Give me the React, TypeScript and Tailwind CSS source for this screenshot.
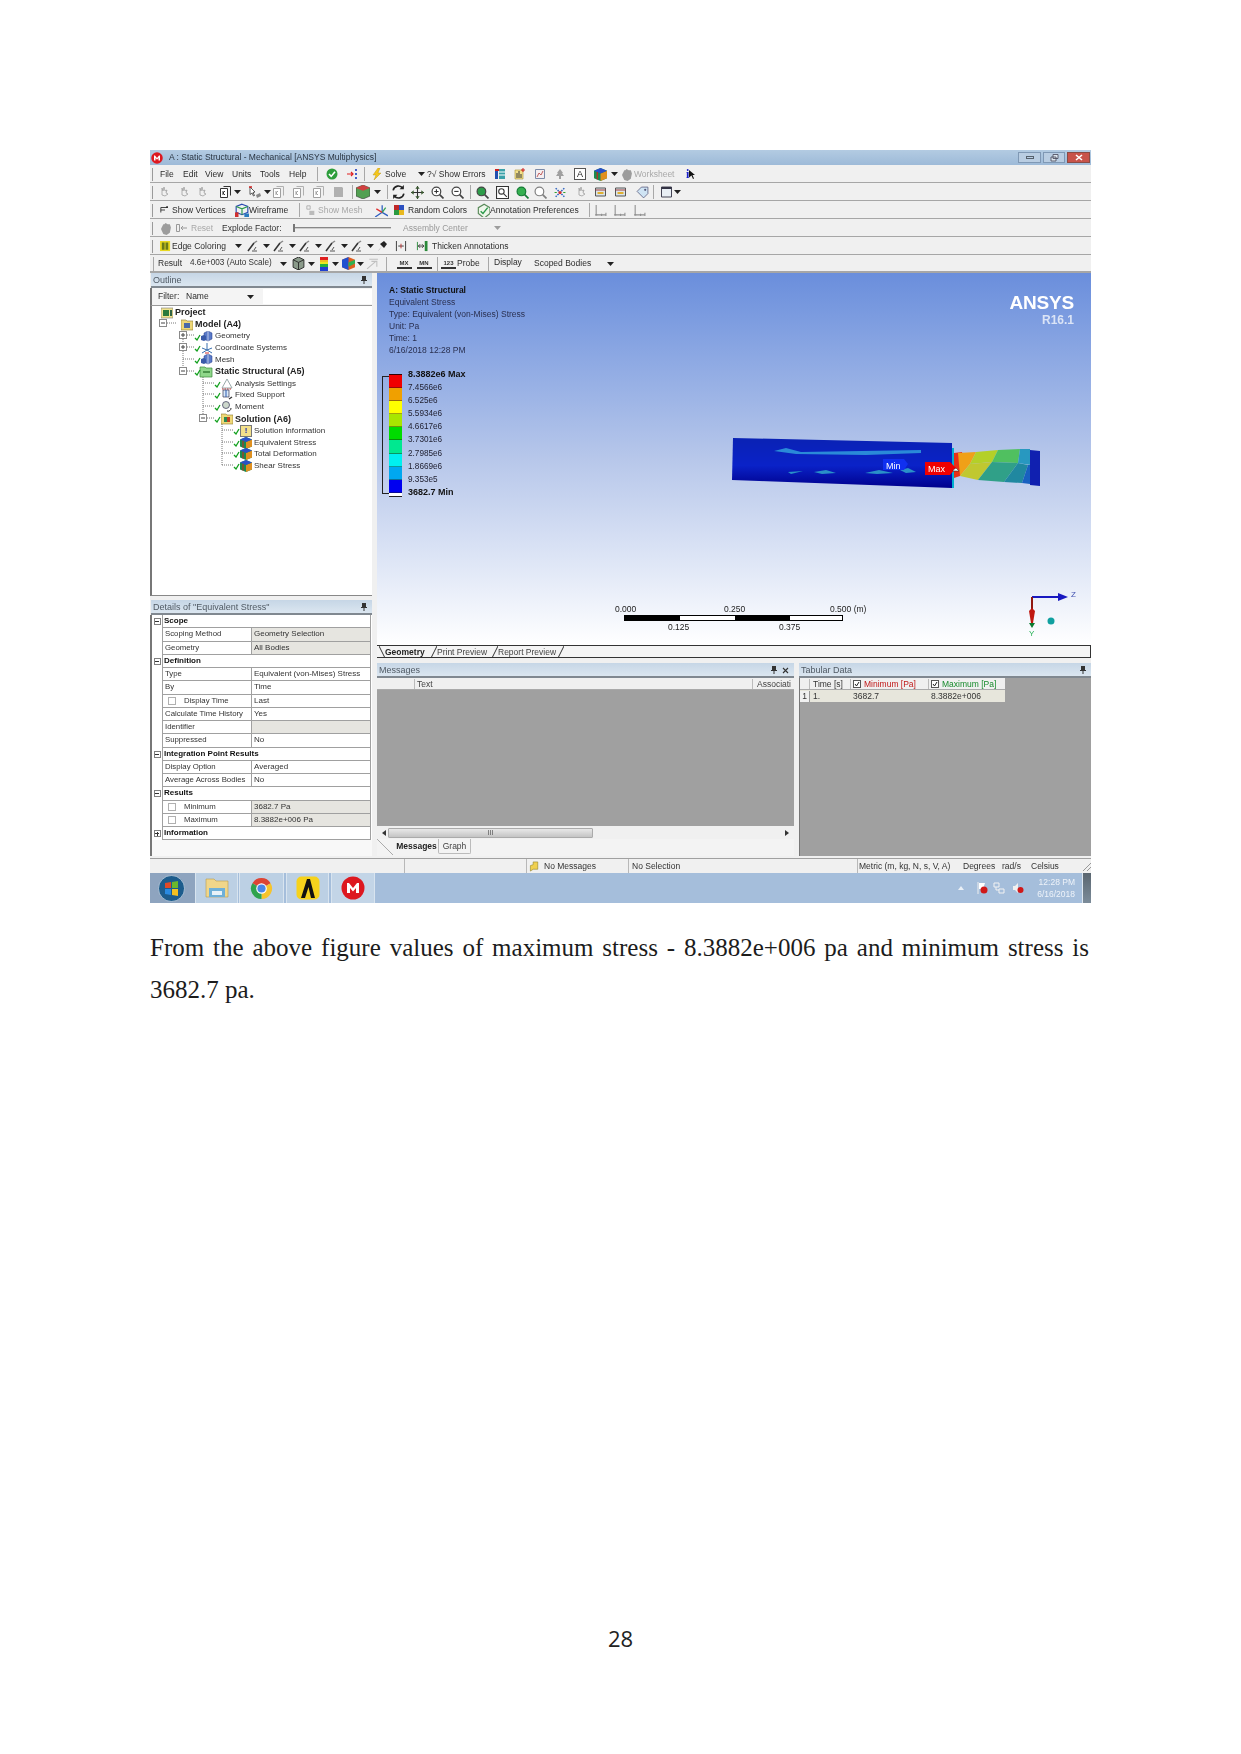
import React from 'react'

const Sv = ({ children, w = 12, h = 12, vb = '0 0 12 12' }: any) => (
    <svg width={w} height={h} viewBox={vb} className="shrink-0">{children}</svg>
)

const Slot = ({ className = '', children }: any) => (
    <div className={`shrink-0 flex items-center justify-center ${className}`}>{children}</div>
)

const Drop = ({ className = 'w-[10px]' }: any) => (
    <Slot className={className}>
        <Sv w={7} h={4} vb="0 0 7 4"><path d="M0 0h7L3.5 4z" fill="#222" /></Sv>
    </Slot>
)

const Grip = () => <div className="shrink-0 w-[1px] h-[13px] bg-[#9a9a9a] ml-[2px] mr-[5px]" />
const Sep = ({ className = 'w-[10px]' }: any) => (
    <Slot className={className}><div className="w-[1px] h-[14px] bg-[#a8a8a8]" /></Slot>
)

const Row = ({ children, className = '' }: any) => (
    <div className={`h-[18px] shrink-0 flex items-center pt-[1px] border-b border-[#a6a6a6] bg-[#f0f0f0] whitespace-nowrap ${className}`}>
        {children}
    </div>
)

/* toolbar icons */
const Check = () => (
    <Sv><circle cx="6" cy="6" r="5.5" fill="#2e9e3c" /><path d="M3 6l2.2 2.4L9 3.8" stroke="#fff" strokeWidth="1.6" fill="none" /></Sv>
)
const DotsArrow = () => (
    <Sv><path d="M1 6h6M5 4l2 2-2 2" stroke="#e02020" strokeWidth="1.2" fill="none" /><path d="M10 1v2M10 5v2M10 9v2" stroke="#1a3cc0" strokeWidth="1.6" /></Sv>
)
const Bolt = () => <Sv><path d="M7 0L2 7h3L3 12l7-7H7l2-5z" fill="#f4c71c" stroke="#b08a10" strokeWidth=".4" /></Sv>
const TableIc = () => (
    <Sv><path d="M1 3h3v8H1z" fill="#2050b0" /><path d="M5 1h6v10H5z" fill="#3aa0a8" /><path d="M1 1h4v2H1z" fill="#d02020" /><path d="M5 4h6M5 7h6" stroke="#fff" /></Sv>
)
const ChartIc = () => (
    <Sv><path d="M1 2h8v9H1z" fill="#f3e08a" stroke="#a89030" strokeWidth=".6" /><path d="M3 10V5M5 10V3M7 10V6" stroke="#333" /><path d="M9 0v4M7 2h4" stroke="#d02020" /></Sv>
)
const PaleChart = () => (
    <Sv><path d="M1.5 1.5h9v9h-9z" fill="#f4eef0" stroke="#7a8aa8" /><path d="M3 9l2-4 2 2 2-4" stroke="#c06060" fill="none" /></Sv>
)
const TreeIc = () => <Sv><path d="M6 1l3 4H8l2 3H7v3H5V8H2l2-3H3z" fill="#a0a0a0" /></Sv>
const BoxA = () => (
    <Slot className="w-[12px] h-[12px] border border-[#555] bg-white text-[9px] leading-none text-[#222]">A</Slot>
)
const ColorCube = ({ w = 13 }: any) => (
    <Sv w={w} h={w}>
        <path d="M6 0l6 2.5v7L6 12 0 9.5v-7z" fill="#1a8a50" />
        <path d="M6 5l6-2.5v7L6 12z" fill="#e09020" />
        <path d="M0 2.500l6-2.500 6 2.500-6 2.500z" fill="#2a50c8" />
        <path d="M3 3.800v6.900" stroke="#d02020" />
    </Sv>
)
const Hand = () => <Sv w={13} h={13}><path d="M2 6l2-4h1l1-1 2 1h2l1 3-1 5-3 2-3-1-2-4z" fill="#9c9c9c" /></Sv>
const Page = ({ dark = false }: any) => (
    <Sv w={13} h={13} vb="0 0 13 13">
        <path d="M1.500 2.500h7v9h-7z" fill="#fff" stroke={dark ? '#333' : '#a0a0a0'} />
        <path d="M4.500 .5h7v9" fill="none" stroke={dark ? '#333' : '#b0b0b0'} />
        <path d="M4 5v4M4 7l2-2M4 7l2 2" stroke={dark ? '#333' : '#a0a0a0'} />
    </Sv>
)
const Faded = () => (
    <Sv><path d="M3 5V2l1 3 1-4 1 4 2-1-1 3 2 1-3 2-3-1z" fill="none" stroke="#a0a0a0" strokeWidth=".8" /></Sv>
)
const Sel = () => (
    <Sv w={14} h={13} vb="0 0 14 13"><path d="M2 1l5 5-2 .500 1.500 3-1 .500L4 7l-2 1.500z" fill="#fff" stroke="#333" strokeWidth=".8" /><path d="M1 1h3" stroke="#d02020" strokeWidth="1.500" /><path d="M8 9l4-2 1 3-4 2z" fill="#888" /></Sv>
)
const GrayCube = () => <Sv><path d="M2 1h8l1 1v9H2z" fill="#b0b0b0" /></Sv>
const SelCube = () => (
    <Sv w={14} h={14}><path d="M6 0l6 2.500v7L6 12 0 9.500v-7z" fill="#52a052" stroke="#333" strokeWidth=".5" /><path d="M0 2.500l6 2.500 6-2.500L6 0z" fill="#d04040" /></Sv>
)
const Rotate = () => (
    <Sv w={15} h={14} vb="0 0 14 13"><path d="M2 5a5 5 0 019-2M12 8a5 5 0 01-9 2" stroke="#222" strokeWidth="1.500" fill="none" /><path d="M12 0v4H8zM2 13V9h4z" fill="#222" /></Sv>
)
const Pan = () => (
    <Sv w={13} h={13} vb="0 0 12 12"><path d="M6 0v12M0 6h12" stroke="#333" /><path d="M6 0L4 2.500h4zM6 12L4 9.500h4zM0 6l2.500-2v4zM12 6L9.500 4v4z" fill="#3a5a30" /></Sv>
)
const Mag = ({ fill = '#fff', sign = '', stroke = '#444' }: any) => (
    <Sv w={13} h={13} vb="0 0 12 12">
        <circle cx="5" cy="5" r="4" fill={fill} stroke={stroke} strokeWidth="1.100" />
        <path d="M8 8l3.500 3.500" stroke={stroke} strokeWidth="1.500" />
        {sign === '+' && <path d="M3 5h4M5 3v4" stroke="#333" />}
        {sign === '-' && <path d="M3 5h4" stroke="#333" />}
    </Sv>
)
const BoxMag = () => (
    <Sv w={13} h={13} vb="0 0 12 12"><path d="M.5 .5h11v11H.5z" fill="#fff" stroke="#333" /><circle cx="5" cy="5" r="2.500" fill="none" stroke="#333" /><path d="M7 7l3 3" stroke="#333" /></Sv>
)
const Dots = () => (
    <Sv w={14} h={13}><path d="M2 2l8 8M10 2l-8 8" stroke="#2a60c0" strokeWidth="1.300" strokeDasharray="1.500 1" /><circle cx="6" cy="6" r="1.500" fill="#d03030" /><path d="M1 6h2M9 6h2" stroke="#30a030" /></Sv>
)
const Window = () => (
    <Sv w={13} h={12}><path d="M1 1h10v10H1z" fill="#e8eef4" stroke="#445" /><path d="M1 1h10v2H1z" fill="#334" /></Sv>
)
const SmallBox = () => (
    <Sv w={13} h={12}><path d="M1 2h10v8H1z" fill="#dce4ea" stroke="#555" /><path d="M1 4h10" stroke="#a04040" /><path d="M3 6h6v2H3z" fill="#e0b030" /></Sv>
)
const Tag = () => (
    <Sv w={13} h={13}><path d="M1 5l4-4h6v6l-4 4z" fill="#cfe4f4" stroke="#557" strokeWidth=".7" /><circle cx="8.500" cy="3.500" r="1" fill="#557" /></Sv>
)
const Axes = () => (
    <Sv w={13} h={13}><path d="M2 1v9h9" stroke="#909090" fill="none" /><path d="M1 10h2M7 9v2M11 8v3" stroke="#909090" /></Sv>
)
const Vert = () => <Sv w={10} h={10}><path d="M1 9V3h8M1 6h5" stroke="#222" fill="none" /><rect x="7.500" y="1.500" width="2" height="2" fill="#222" /></Sv>
const Wire = () => (
    <Sv w={14} h={14}><path d="M6 1l5 2v5l-5 2-5-2V3z" fill="none" stroke="#2a4ab0" /><path d="M1 3l5 2 5-2M6 5v5" stroke="#2a9a4a" fill="none" /><path d="M0 8h3v4H0z" fill="#d03030" /><path d="M8 9h4v3H8z" fill="#2a7ac0" /></Sv>
)
const Star = () => (
    <Sv w={14} h={14}><path d="M7 2v6M7 8L1 12M7 8l5 3" stroke="#3060c0" strokeWidth="1.100" /><path d="M2 5l5 3" stroke="#e03030" strokeWidth="1.100" /><path d="M7 8l3-4" stroke="#30a050" strokeWidth="1.100" /></Sv>
)
const Random = () => (
    <Sv w={12} h={12}><path d="M1 1h5v5H1z" fill="#c02828" /><path d="M6 1h5v5H6z" fill="#2c50c0" /><path d="M1 6h5v5H1z" fill="#2a9a40" /><path d="M6 6h5v5H6z" fill="#e8b81e" /></Sv>
)
const Annot = () => (
    <Sv w={14} h={14}><path d="M7 1l5 3 0 5-5 4-5-4V4z" fill="#eef6ea" stroke="#5a8a5a" /><path d="M4 7l2 2 4-5" stroke="#2a9a4a" fill="none" strokeWidth="1.200" /></Sv>
)
const EdgeIc = () => (
    <Sv w={11} h={11}><path d="M0 0h11v11H0z" fill="#e8d820" /><path d="M2 1.500h3v8H2zM6 1.500h3v8H6z" fill="#6a7a18" /></Sv>
)
const Pen = () => (
    <Sv w={12} h={12}><path d="M1 11L7 3" stroke="#333" strokeWidth="1.500" /><path d="M7 3l3-2" stroke="#888" strokeWidth="1.500" /><path d="M7 10l2-3M5 11h5" stroke="#555" /></Sv>
)
const Pin = () => <Sv><path d="M2 11l4-5-2-2 4-3 3 3-3 4-2-2-3 4z" fill="#222" /></Sv>
const Thin = () => <Sv w={12} h={11}><path d="M1 0v11M11 0v11M3 5.500h6" stroke="#333" /><path d="M6 3v5" stroke="#c03030" /></Sv>
const Thick = () => <Sv w={12} h={11}><path d="M1 1v9" stroke="#2a8a3a" /><path d="M9 0h3v11H9z" fill="#2a8a3a" /><path d="M2 5.500h6M6 3.500l2 2-2 2M4 3.500l-2 2 2 2" stroke="#333" fill="none" /></Sv>
const GCube = () => (
    <Sv w={13} h={13}><path d="M6 0l5 2.500v7L6 12 1 9.500v-7z" fill="#8a9a8a" stroke="#222" strokeWidth=".8" /><path d="M1 2.500L6 5l5-2.500M6 5v7" stroke="#222" fill="none" strokeWidth=".8" /></Sv>
)
const ColorBar = () => (
    <Sv w={8} h={14} vb="0 0 8 14">
        <path d="M0 0h8v3H0z" fill="#e02020" /><path d="M0 3h8v2H0z" fill="#f0c020" /><path d="M0 5h8v2H0z" fill="#e8e820" />
        <path d="M0 7h8v3H0z" fill="#20b040" /><path d="M0 10h8v4H0z" fill="#2040d0" />
    </Sv>
)
const Rainbow = () => (
    <Sv w={13} h={13}><path d="M6 0l6 2.500v7L6 12 0 9.500v-7z" fill="#e06020" /><path d="M0 2.500L6 0v12L0 9.500z" fill="#2050d0" /><path d="M6 5l6-2.500V6L6 9z" fill="#30b050" /></Sv>
)
const Vec = () => <Sv w={13} h={13}><path d="M1 11l8-7M5 4h5v5M3 2h8" stroke="#c0c0c0" fill="none" /></Sv>
const BoxBtn = ({ label }: any) => (
    <Slot className="w-[15px] h-[10px] text-[6px] leading-none border-b-2 border-[#333] font-bold text-[#333]">{label}</Slot>
)

/* tree icons */
const GreenCheck = () => (
    <Sv w={7} h={7} vb="0 0 7 7"><path d="M1 4l2 2 3-5" stroke="#12a01e" strokeWidth="1.300" fill="none" /></Sv>
)
const TreeIcon = ({ kind }: any) => {
    if (kind === 'project') return <Sv><path d="M0 1h12v10H0z" fill="#f1e38e" stroke="#777" strokeWidth=".6" /><path d="M2 3h6v6H2z" fill="#2a7a3c" /><path d="M9 3h2v6H9z" fill="#364" /></Sv>
    if (kind === 'model') return <Sv><path d="M0 1h5l1 1h6v9H0z" fill="#efd878" stroke="#8a7a30" strokeWidth=".6" /><path d="M3 4h6v5H3z" fill="#4a6aa8" /></Sv>
    if (kind === 'static') return <Sv w={14} h={12} vb="0 0 14 12"><path d="M1 1h5l1 1h6v9H1z" fill="#8fd78a" stroke="#3a8a3a" strokeWidth=".7" /><path d="M4 6h7" stroke="#1f6a22" strokeWidth="1.200" /></Sv>
    if (kind === 'geom') return <Sv><path d="M3 2l4-2 4 2v6l-4 2-4-2z" fill="#5a7ac8" stroke="#223a88" strokeWidth=".5" /><path d="M0 5l3-1 2 1v4l-2 1-3-1z" fill="#3a5aa8" /><path d="M7 0v10" stroke="#fff" strokeWidth=".6" /></Sv>
    if (kind === 'axes') return <Sv><path d="M6 1v7M6 8L1 11M6 8l5 3M1 6l5 2 5-2" stroke="#3a70b0" fill="none" /><path d="M4 11h4" stroke="#d03030" /></Sv>
    if (kind === 'analysis') return <Sv><path d="M6 1L1 10h10z" fill="#fff" stroke="#9aa" /><path d="M1 11h10" stroke="#c03030" strokeDasharray="1.500 1" /></Sv>
    if (kind === 'fixed') return <Sv><path d="M2 1h6v7H2z" fill="#d8e8f8" stroke="#335" strokeWidth=".7" /><path d="M5 1v7" stroke="#2a5ab0" /><path d="M8 10l3-2" stroke="#333" strokeWidth="1.300" /></Sv>
    if (kind === 'moment') return <Sv><circle cx="5" cy="4" r="3.500" fill="#cdd8cc" stroke="#335" strokeWidth=".7" /><path d="M6 10a3 3 0 004-3" stroke="#222" fill="none" /></Sv>
    if (kind === 'solution') return <Sv><path d="M0 1h5l1 1h6v9H0z" fill="#efd878" stroke="#8a7a30" strokeWidth=".6" /><path d="M3 4h3v5H3z" fill="#2a8a50" /><path d="M6 4h3v5H6z" fill="#c04020" /></Sv>
    if (kind === 'info') return <Slot className="w-[12px] h-[12px] bg-[#f3e08a] border border-[#777] text-[8px] font-bold leading-none text-[#1a2ab0]">!</Slot>
    return <ColorCube w={12} />
}

const treeRows = [
    { label: 'Project', bold: true, icon: 'project', pl: 'pl-[5px]', check: false },
    { label: 'Model (A4)', bold: true, icon: 'model', pl: 'pl-[25px]', check: false },
    { label: 'Geometry', icon: 'geom', pl: 'pl-[45px]', check: true },
    { label: 'Coordinate Systems', icon: 'axes', pl: 'pl-[45px]', check: true },
    { label: 'Mesh', icon: 'geom', pl: 'pl-[45px]', check: true },
    { label: 'Static Structural (A5)', bold: true, icon: 'static', pl: 'pl-[45px]', check: true },
    { label: 'Analysis Settings', icon: 'analysis', pl: 'pl-[65px]', check: true },
    { label: 'Fixed Support', icon: 'fixed', pl: 'pl-[65px]', check: true },
    { label: 'Moment', icon: 'moment', pl: 'pl-[65px]', check: true },
    { label: 'Solution (A6)', bold: true, icon: 'solution', pl: 'pl-[65px]', check: true },
    { label: 'Solution Information', icon: 'info', pl: 'pl-[84px]', check: true },
    { label: 'Equivalent Stress', icon: 'cube', pl: 'pl-[84px]', check: true },
    { label: 'Total Deformation', icon: 'cube', pl: 'pl-[84px]', check: true },
    { label: 'Shear Stress', icon: 'cube', pl: 'pl-[84px]', check: true },
]

const Expander = ({ x, y, plus = false }: any) => (
    <g>
        <rect x={x - 3.5} y={y - 3.5} width="7" height="7" fill="#fff" stroke="#8a8a8a" />
        <path d={`M${x - 2} ${y}h4`} stroke="#444" />
        {plus && <path d={`M${x} ${y - 2}v4`} stroke="#444" />}
    </g>
)

const TreeLines = () => (
    <svg width="120" height="170" viewBox="0 0 120 170" className="absolute left-0 top-0">
        <g stroke="#777" strokeDasharray="1 1" fill="none">
            <path d="M11 17h14M31 29v36M31 29h12M31 41h12M31 53h12M31 65h12" />
            <path d="M51 65v47M51 77h12M51 88h12M51 100h12M51 112h12" />
            <path d="M70 112v47M70 124h12M70 136h12M70 147h12M70 159h12" />
        </g>
        <Expander x={11} y={17} />
        <Expander x={31} y={29} plus />
        <Expander x={31} y={41} plus />
        <Expander x={31} y={65} />
        <Expander x={51} y={112} />
    </svg>
)

const Head = ({ title, children, className = '' }: any) => (
    <div className={`h-[15px] shrink-0 flex items-center justify-between px-[2px] pt-[1px] bg-linear-to-b from-[#c6d6e6] to-[#dbe6f0] border-b-2 border-[#808890] text-[9px] text-[#505a64] ${className}`}>
        <span>{title}</span>
        <div className="flex items-center gap-[5px] pr-[3px]">{children}</div>
    </div>
)

const PinIc = () => <Sv w={6} h={8} vb="0 0 6 8"><path d="M1 0h4v4h1v1H3.500v3h-1V5H0V4h1z" fill="#333" /></Sv>

const Box = () => <div className="shrink-0 w-[8px] h-[8px] border border-[#b0b0b0] bg-white mx-[3px] mr-[8px]" />

const detailRows: any[] = [
    { section: 'Scope', open: true },
    { name: 'Scoping Method', value: 'Geometry Selection', shade: true },
    { name: 'Geometry', value: 'All Bodies', shade: true },
    { section: 'Definition', open: true },
    { name: 'Type', value: 'Equivalent (von-Mises) Stress' },
    { name: 'By', value: 'Time' },
    { name: 'Display Time', value: 'Last', box: true },
    { name: 'Calculate Time History', value: 'Yes' },
    { name: 'Identifier', value: '', shade: true },
    { name: 'Suppressed', value: 'No' },
    { section: 'Integration Point Results', open: true },
    { name: 'Display Option', value: 'Averaged' },
    { name: 'Average Across Bodies', value: 'No' },
    { section: 'Results', open: true },
    { name: 'Minimum', value: '3682.7 Pa', shade: true, box: true },
    { name: 'Maximum', value: '8.3882e+006 Pa', shade: true, box: true },
    { section: 'Information', open: false },
]

const DetailBox = ({ open }: any) => (
    <Slot className="w-[10px]">
        <div className="w-[7px] h-[7px] border border-[#808080] bg-white flex items-center justify-center relative">
            <div className="w-[4px] h-[1px] bg-[#333]" />
            {!open && <div className="absolute w-[1px] h-[4px] bg-[#333]" />}
        </div>
    </Slot>
)

const DetailsTable = () => (
    <div className="flex flex-col bg-white pr-[1px] text-[8px] whitespace-nowrap">
        {detailRows.map((r) => r.section ? (
            <div key={r.section} className="h-[13.25px] flex items-center">
                <DetailBox open={r.open} />
                <div className="flex-1 h-full flex items-center pl-[1px] font-bold text-[#111] border border-t-0 border-[#a0a0a0] bg-white">{r.section}</div>
            </div>
        ) : (
            <div key={r.name} className="h-[13.25px] flex items-center">
                <div className="w-[10px] shrink-0" />
                <div className="w-[90px] shrink-0 h-full flex items-center pl-[2px] text-[7.800px] border-l border-b border-r border-[#a0a0a0] text-[#333]">
                    {r.box && <Box />}
                    {r.name}
                </div>
                <div className={`flex-1 h-full flex items-center pl-[2px] border-b border-r border-[#a0a0a0] text-[#333] ${r.shade ? 'bg-[#e6e5e0]' : 'bg-white'}`}>{r.value}</div>
            </div>
        ))}
    </div>
)

const legend = [
    ['bg-[#f00000]', '8.3882e6 Max', true],
    ['bg-[#f0a000]', '7.4566e6', false],
    ['bg-[#ffff00]', '6.525e6', false],
    ['bg-[#a8e600]', '5.5934e6', false],
    ['bg-[#00dc00]', '4.6617e6', false],
    ['bg-[#00e890]', '3.7301e6', false],
    ['bg-[#00f0f0]', '2.7985e6', false],
    ['bg-[#00a8f0]', '1.8669e6', false],
    ['bg-[#0000f0]', '9.353e5', false],
] as const

const Legend = () => (
    <div className="mt-[19px] -ml-[7px] flex">
        <div className="w-[7px] h-[118px] mt-[2px] border-l border-t border-b border-[#222]" />
        <div className="flex flex-col w-[13px]">
            <div className="h-[1px] bg-[#300]" />
            {legend.map(([c]) => <div key={c} className={`h-[13.1px] border-b border-[#1a1a1a]/40 ${c}`} />)}
            <div className="h-[4px] bg-white border-b border-[#222]" />
        </div>
        <div className="flex flex-col ml-[6px] text-[8.200px] text-[#223] leading-[13.1px] -mt-[6px]">
            {legend.map(([c, t, b]) => <span key={t} className={b ? 'font-bold text-[9px] text-[#111]' : ''}>{t}</span>)}
            <span className="font-bold text-[9px] text-[#111]">3682.7 Min</span>
        </div>
    </div>
)

const Model = () => (
    <svg width="380" height="80" viewBox="0 0 380 80" className="absolute left-[343px] top-[147px]">
        <defs>
            <linearGradient id="body" x1="0" y1="0" x2="0" y2="1">
                <stop offset="0" stopColor="#0a22b4" />
                <stop offset=".55" stopColor="#0a22c8" />
                <stop offset="1" stopColor="#00008c" />
            </linearGradient>
        </defs>
        <path d="M13 18L232 23V68L12 60Z" fill="url(#body)" />
        <path d="M54 31l12-3 15 4 120-2v3l-55 2-70-1z" fill="#2a8ad8" />
        <path d="M68 52l15-1-12 3zM94 52l12-2 10 3-14 1zM145 53l14-3 14 3-16 1zM180 50l8-2 8 4-10 1z" fill="#2a90c8" />
        <path d="M232 28l2 0v40l-2 0z" fill="#00b0d0" />
        <path d="M234 33l8-1 2 10-4 14-6 2z" fill="#e83018" />
        <path d="M238 33l18-1-6 12-10 12z" fill="#f0a018" />
        <path d="M256 32l22-2-6 12-22 2z" fill="#b4d028" />
        <path d="M278 30l22-1-2 14-26-1z" fill="#50c060" />
        <path d="M240 56l10-12 22-2-14 18z" fill="#c0c830" />
        <path d="M272 42l26 1-14 19-26-2z" fill="#30a088" />
        <path d="M298 43l10 2-6 18-18-1z" fill="#2088a0" />
        <path d="M300 29h10l1 16-13-2z" fill="#2898c0" />
        <path d="M308 45l3 0-1 19-8-1z" fill="#1860c0" />
        <path d="M310 30l10 1v35l-10-1z" fill="#1020b0" />
        <path d="M163 39h21l4 5-4 6h-21z" fill="#1030f0" />
        <text x="166" y="48.500" fontSize="9" fill="#fff" fontFamily="Liberation Sans, sans-serif">Min</text>
        <path d="M205 42h25l6 6-6 7h-25z" fill="#f00000" />
        <text x="208" y="52" fontSize="9" fill="#fff" fontFamily="Liberation Sans, sans-serif">Max</text>
        <path d="M233 50l3-2 3 3h-6z" fill="#fff" stroke="#222" strokeWidth=".5" />
    </svg>
)

const ScaleBar = () => (
    <div className="absolute left-[238px] top-[330px] w-[260px] text-[8.500px] text-[#222] whitespace-nowrap">
        <div className="flex h-[12px] items-center">
            <span className="w-[109px]">0.000</span>
            <span className="w-[106px]">0.250</span>
            <span>0.500 (m)</span>
        </div>
        <div className="ml-[9px] w-[219px] h-[6px] flex border border-black">
            <div className="w-[55px] bg-black" /><div className="w-[55px] bg-white" />
            <div className="w-[55px] bg-black" /><div className="flex-1 bg-white" />
        </div>
        <div className="flex h-[13px] items-center pl-[53px]">
            <span className="w-[111px]">0.125</span>
            <span>0.375</span>
        </div>
    </div>
)

const Triad = () => (
    <svg width="66" height="46" viewBox="0 0 66 46" className="absolute left-[638px] top-[318px]">
        <path d="M17 6h26" stroke="#1818c0" strokeWidth="2" />
        <path d="M43 2l10 4-10 4z" fill="#1818c0" />
        <text x="56" y="6" fontSize="8" fill="#4050b0" fontFamily="Liberation Sans, sans-serif">Z</text>
        <path d="M17 6v16" stroke="#901810" strokeWidth="2" />
        <path d="M14 20l3-3 3 3-2 12h-2z" fill="#c01810" />
        <path d="M14 32h6l-3 5z" fill="#0a7a30" />
        <text x="14" y="45" fontSize="8" fill="#20b050" fontFamily="Liberation Sans, sans-serif">Y</text>
        <circle cx="36" cy="30" r="3.500" fill="#10a0a0" />
    </svg>
)

const TabEdge = () => (
    <Sv w={6} h={12} vb="0 0 6 12"><path d="M0 12L6 0" stroke="#333" /></Sv>
)
const TabEdgeL = () => (
    <Sv w={6} h={12} vb="0 0 6 12"><path d="M0 0L6 12" stroke="#333" /></Sv>
)

const CheckBox = () => (
    <div className="w-[8px] h-[8px] border border-[#555] bg-white flex items-center justify-center shrink-0 mr-[3px]">
        <Sv w={6} h={6} vb="0 0 6 6"><path d="M1 3l1.500 2L5 1" stroke="#222" fill="none" /></Sv>
    </div>
)

const MegaLogo = ({ w = 24 }: any) => (
    <Sv w={w} h={w} vb="0 0 24 24">
        <circle cx="12" cy="12" r="11.500" fill="#dd1820" />
        <path d="M6 17V7h2l4 5 4-5h2v10h-3v-5l-3 3.500L9 12v5z" fill="#fff" />
    </Sv>
)

export default function App() {
    return (
        <div className="w-[1241px] h-[1754px] bg-white flex flex-col px-[150px] pt-[150px] font-['Liberation_Serif',serif] text-[#1c1c1c]">
            <div className="w-[941px] h-[753px] shrink-0 flex flex-col bg-[#f0f0f0] font-['Liberation_Sans',sans-serif] text-[8.500px] text-[#2c2c2c] leading-none blur-[0.4px]">
                {/* title */}
                <div className="h-[15px] shrink-0 flex items-center pl-[1px] bg-linear-to-b from-[#b3cbe2] to-[#9dbad8] text-[#2a3440]">
                    <MegaLogo w={12} />
                    <span className="ml-[6px] flex-1">A : Static Structural - Mechanical [ANSYS Multiphysics]</span>
                    <div className="flex h-[11px] items-stretch gap-[2px] mr-[1px]">
                        <Slot className="w-[23px] border border-[#7f98b4] bg-[#b9cde2]"><div className="w-[8px] h-[3px] border border-[#55606c]" /></Slot>
                        <Slot className="w-[22px] border border-[#7f98b4] bg-[#b9cde2]"><Sv w={9} h={8} vb="0 0 9 8"><path d="M3 .5h5v4H3zM1 3h5v4H1z" fill="#dde6ee" stroke="#445" strokeWidth=".8" /></Sv></Slot>
                        <Slot className="w-[23px] border border-[#8a4a44] bg-[#c8534a]"><Sv w={8} h={7} vb="0 0 8 7"><path d="M1 1l6 5M7 1L1 6" stroke="#fff" strokeWidth="1.600" /></Sv></Slot>
                    </div>
                </div>
                {/* toolbars */}
                <Row>
                    <Grip />
                    <span className="ml-[2px] w-[23px]">File</span>
                    <span className="w-[22px]">Edit</span>
                    <span className="w-[27px]">View</span>
                    <span className="w-[28px]">Units</span>
                    <span className="w-[29px]">Tools</span>
                    <span className="w-[26px]">Help</span>
                    <Sep className="w-[4px]" />
                    <Slot className="w-[26px]"><Check /></Slot>
                    <Slot className="w-[14px]"><DotsArrow /></Slot>
                    <Sep />
                    <Slot className="w-[16px]"><Bolt /></Slot>
                    <span className="w-[30px]">Solve</span>
                    <Drop className="w-[12px]" />
                    <span className="w-[63px]">?√ Show Errors</span>
                    <Slot className="w-[20px]"><TableIc /></Slot>
                    <Slot className="w-[20px]"><ChartIc /></Slot>
                    <Slot className="w-[20px]"><PaleChart /></Slot>
                    <Slot className="w-[20px]"><TreeIc /></Slot>
                    <Slot className="w-[20px]"><BoxA /></Slot>
                    <Slot className="w-[20px]"><ColorCube /></Slot>
                    <Drop className="w-[8px]" />
                    <Slot className="w-[16px]"><Hand /></Slot>
                    <span className="w-[52px] text-[#a8a8a8]">Worksheet</span>
                    <span className="font-['Liberation_Serif',serif] font-bold text-[12px] text-[#1c22c8]">i</span>
                    <Sv w={7} h={9} vb="0 0 7 9"><path d="M0 0l6 5H3.500L5 8.500 4 9 2.500 5.500 0 7.500z" fill="#111" /></Sv>
                </Row>
                <Row>
                    <Grip />
                    <Slot className="w-[14px]"><Faded /></Slot>
                    <Slot className="w-[14px] ml-[6px]"><Faded /></Slot>
                    <Slot className="w-[14px] ml-[4px]"><Faded /></Slot>
                    <Slot className="w-[14px] ml-[8px]"><Page dark /></Slot>
                    <Drop className="w-[8px] ml-[1px]" />
                    <Slot className="w-[14px] ml-[7px]"><Sel /></Slot>
                    <Drop className="w-[8px] ml-[1px]" />
                    <Slot className="w-[14px]"><Page /></Slot>
                    <Slot className="w-[14px] ml-[6px]"><Page /></Slot>
                    <Slot className="w-[14px] ml-[6px]"><Page /></Slot>
                    <Slot className="w-[14px] ml-[6px]"><GrayCube /></Slot>
                    <Sep className="w-[4px] ml-[5px]" />
                    <Slot className="w-[14px] ml-[2px]"><SelCube /></Slot>
                    <Drop className="w-[8px] ml-[3px]" />
                    <Sep className="w-[4px] ml-[4px]" />
                    <Slot className="w-[14px] ml-[2px]"><Rotate /></Slot>
                    <Slot className="w-[14px] ml-[5px]"><Pan /></Slot>
                    <Slot className="w-[14px] ml-[6px]"><Mag sign="+" /></Slot>
                    <Slot className="w-[14px] ml-[6px]"><Mag sign="-" /></Slot>
                    <Sep className="w-[4px] ml-[4px]" />
                    <Slot className="w-[14px] ml-[3px]"><Mag fill="#2d9c4a" /></Slot>
                    <Slot className="w-[14px] ml-[6px]"><BoxMag /></Slot>
                    <Slot className="w-[14px] ml-[6px]"><Mag fill="#34b050" stroke="#157a35" /></Slot>
                    <Slot className="w-[14px] ml-[4px]"><Mag stroke="#808080" /></Slot>
                    <Slot className="w-[14px] ml-[6px]"><Dots /></Slot>
                    <Slot className="w-[14px] ml-[8px]"><Faded /></Slot>
                    <Slot className="w-[14px] ml-[4px]"><SmallBox /></Slot>
                    <Slot className="w-[14px] ml-[6px]"><SmallBox /></Slot>
                    <Slot className="w-[14px] ml-[8px]"><Tag /></Slot>
                    <Sep className="w-[4px] ml-[2px]" />
                    <Slot className="w-[14px] ml-[4px]"><Window /></Slot>
                    <Drop className="w-[8px]" />
                </Row>
                <Row>
                    <Grip />
                    <Slot className="w-[14px]"><Vert /></Slot>
                    <span className="w-[62px]">Show Vertices</span>
                    <Slot className="w-[15px]"><Wire /></Slot>
                    <span className="w-[47px]">Wireframe</span>
                    <Sep className="w-[7px]" />
                    <Slot className="w-[15px]"><Sv w={10} h={12}><path d="M1 1h4v4H1z" fill="none" stroke="#a8a8a8" /><path d="M4 7h6v5H4z" fill="#bbb" /></Sv></Slot>
                    <span className="w-[53px] text-[#a8a8a8]">Show Mesh</span>
                    <Slot className="w-[19px]"><Star /></Slot>
                    <Slot className="w-[18px]"><Random /></Slot>
                    <span className="w-[68px]">Random Colors</span>
                    <Slot className="w-[14px]"><Annot /></Slot>
                    <span className="w-[97px]">Annotation Preferences</span>
                    <Sep className="w-[5px]" />
                    <Slot className="w-[17px]"><Axes /></Slot>
                    <Slot className="w-[20px]"><Axes /></Slot>
                    <Slot className="w-[20px]"><Axes /></Slot>
                </Row>
                <Row>
                    <Grip />
                    <Slot className="w-[14px]"><Hand /></Slot>
                    <Slot className="w-[19px]"><Sv w={11} h={8} vb="0 0 11 8"><path d="M.5 .5h3v7h-3z" fill="none" stroke="#999" /><path d="M11 4H5M7 2L5 4l2 2" stroke="#999" fill="none" /></Sv></Slot>
                    <span className="w-[31px] text-[#a8a8a8]">Reset</span>
                    <span className="w-[71px] text-[#333]">Explode Factor:</span>
                    <div className="w-[98px] h-[7px] flex items-center relative shrink-0 mr-[12px]">
                        <div className="flex-1 h-[2px] bg-[#888] border-b border-[#ccc]" />
                        <div className="absolute left-0 w-[2px] h-[8px] bg-[#777]" />
                    </div>
                    <span className="w-[92px] text-[#999]">Assembly Center</span>
                    <Drop className="w-[4px] opacity-40" />
                </Row>
                <Row>
                    <Grip />
                    <Slot className="w-[14px]"><EdgeIc /></Slot>
                    <span className="w-[58px]">Edge Coloring</span>
                    <Drop className="w-[16px]" />
                    <Slot className="w-[14px]"><Pen /></Slot>
                    <Drop className="w-[12px]" />
                    <Slot className="w-[14px]"><Pen /></Slot>
                    <Drop className="w-[12px]" />
                    <Slot className="w-[14px]"><Pen /></Slot>
                    <Drop className="w-[12px]" />
                    <Slot className="w-[14px]"><Pen /></Slot>
                    <Drop className="w-[12px]" />
                    <Slot className="w-[14px]"><Pen /></Slot>
                    <Drop className="w-[12px]" />
                    <Slot className="w-[12px]"><Pin /></Slot>
                    <Slot className="w-[25px]"><Thin /></Slot>
                    <Slot className="w-[17px]"><Thick /></Slot>
                    <span className="ml-[2px]">Thicken Annotations</span>
                </Row>
                <Row className="border-b-2 border-[#808080]">
                    <Sep className="w-[7px]" />
                    <span className="w-[33px] pl-[1px]">Result</span>
                    <span className="w-[87px] text-[8.200px] text-[#333]">4.6e+003 (Auto Scale)</span>
                    <Drop className="w-[13px]" />
                    <Slot className="w-[16px]"><GCube /></Slot>
                    <Drop className="w-[11px]" />
                    <Slot className="w-[14px]"><ColorBar /></Slot>
                    <Drop className="w-[9px]" />
                    <Slot className="w-[16px]"><Rainbow /></Slot>
                    <Drop className="w-[9px]" />
                    <Slot className="w-[14px]"><Vec /></Slot>
                    <Sep className="w-[15px]" />
                    <Slot className="w-[20px]"><BoxBtn label="MX" /></Slot>
                    <Slot className="w-[20px]"><BoxBtn label="MN" /></Slot>
                    <Sep className="w-[6px]" />
                    <Slot className="w-[17px]"><BoxBtn label="123" /></Slot>
                    <span className="w-[26px]">Probe</span>
                    <Sep className="w-[11px]" />
                    <span className="w-[40px] -mt-[2px]">Display</span>
                    <span className="w-[71px]">Scoped Bodies</span>
                    <Drop />
                </Row>

                {/* panels */}
                <div className="flex-1 min-h-0 flex">
                    <div className="w-[222px] shrink-0 flex flex-col">
                        <Head title="Outline" className="ml-[1px]"><PinIc /></Head>
                        <div className="h-[17px] shrink-0 flex items-center border-l-2 border-[#777] pl-[4px] bg-[#f4f4f4]">
                            <span className="w-[30px] pl-[2px]">Filter:</span>
                            <span className="w-[61px]">Name</span>
                            <Drop className="w-[6px]" />
                            <div className="flex-1 self-stretch ml-[10px] my-[1px] bg-white" />
                        </div>
                        <div className="relative h-[291px] shrink-0 bg-white border-l-2 border-[#777] border-t border-b border-t-[#999] border-b-[#888] pt-[1px]">
                            <TreeLines />
                            <div className="relative flex flex-col whitespace-nowrap">
                                {treeRows.map((r) => (
                                    <div key={r.label} className={`h-[11.8px] flex items-center ${r.pl}`}>
                                        <div className="w-[18px] shrink-0 flex items-center justify-end relative">
                                            {r.check && <div className="absolute left-[-3px] top-[3px]"><GreenCheck /></div>}
                                            <div className="mr-[2px] flex"><TreeIcon kind={r.icon} /></div>
                                        </div>
                                        <span className={r.bold ? 'font-bold text-[9px] text-[#222]' : 'text-[8px] text-[#333]'}>{r.label}</span>
                                    </div>
                                ))}
                            </div>
                        </div>
                        <Head title='Details of "Equivalent Stress"' className="mt-[4px] ml-[1px]"><PinIc /></Head>
                        <div className="flex-1 border-l-2 border-[#777] bg-[#f8f8f8] flex flex-col">
                            <DetailsTable />
                        </div>
                    </div>

                    <div className="flex-1 min-w-0 ml-[5px] flex flex-col">
                        <div className="relative flex-1 min-h-0 pl-[12px] pt-[13px] overflow-hidden bg-linear-to-b from-[#6a8edc] via-[#b7c7ea] via-50% to-white text-[#2a3050]">
                            <div className="flex flex-col gap-[3px] leading-[9px] whitespace-nowrap">
                                <span className="font-bold text-[#111]">A: Static Structural</span>
                                <span>Equivalent Stress</span>
                                <span>Type: Equivalent (von-Mises) Stress</span>
                                <span>Unit: Pa</span>
                                <span>Time: 1</span>
                                <span>6/16/2018 12:28 PM</span>
                            </div>
                            <Legend />
                            <div className="absolute right-[17px] top-[19px] flex flex-col items-end text-white">
                                <span className="text-[19px] font-bold leading-[21px] tracking-[-0.2px]">ANSYS</span>
                                <span className="text-[12px] font-bold leading-[14px] text-[#dbe4f6]">R16.1</span>
                            </div>
                            <Model />
                            <ScaleBar />
                            <Triad />
                        </div>
                        <div className="h-[13px] shrink-0 flex items-center pl-[2px] pt-[1px] border border-[#333] border-l-0 bg-[#f4f4f4] whitespace-nowrap">
                            <TabEdgeL />
                            <span className="w-[46px] font-bold text-[#222]">Geometry</span>
                            <TabEdge />
                            <span className="w-[55px] text-[#444]">Print Preview</span>
                            <TabEdge />
                            <span className="w-[60px] text-[#444]">Report Preview</span>
                            <TabEdge />
                        </div>
                        <div className="flex-1 min-h-0 flex h-[193px] max-h-[193px] mt-[5px] gap-[5px]">
                            <div className="w-[417px] shrink-0 flex flex-col">
                                <Head title="Messages">
                                    <PinIc />
                                    <Sv w={7} h={7} vb="0 0 7 7"><path d="M1 1l5 5M6 1L1 6" stroke="#333" strokeWidth="1.100" /></Sv>
                                </Head>
                                <div className="h-[12px] shrink-0 flex items-center pt-[1px] bg-[#f0f0f0] border-b border-[#aaa] text-[#444]">
                                    <div className="w-[38px] h-full border-r border-[#bbb]" />
                                    <span className="w-[338px] pl-[2px] h-full flex items-center border-r border-[#bbb]">Text</span>
                                    <span className="pl-[4px] overflow-hidden">Associati</span>
                                </div>
                                <div className="flex-1 bg-[#a0a0a0]" />
                                <div className="h-[13px] shrink-0 flex items-center bg-[#f0f0f0] pl-[5px]">
                                    <Sv w={4} h={6} vb="0 0 4 6"><path d="M4 0v6L0 3z" fill="#333" /></Sv>
                                    <div className="w-[205px] h-[10px] ml-[2px] bg-linear-to-b from-[#e8e8e8] to-[#c4c4c4] border border-[#aaa] rounded-[1px] flex items-center justify-center text-[7px] text-[#555]">III</div>
                                    <div className="flex-1" />
                                    <Sv w={4} h={6} vb="0 0 4 6"><path d="M0 0v6l4-3z" fill="#333" /></Sv>
                                    <div className="w-[5px]" />
                                </div>
                                <div className="h-[17px] shrink-0 flex items-start bg-[#f3f3f3]">
                                    <Sv w={18} h={16} vb="0 0 18 16"><path d="M0 0l16 16" stroke="#aaa" /></Sv>
                                    <span className="w-[43px] h-[15px] flex items-center justify-center font-bold text-[#222]">Messages</span>
                                    <span className="w-[33px] h-[15px] flex items-center justify-center border-r border-b border-l border-[#bbb] rounded-b-[2px] text-[#444]">Graph</span>
                                </div>
                            </div>
                            <div className="flex-1 min-w-0 flex flex-col">
                                <Head title="Tabular Data"><PinIc /></Head>
                                <div className="flex-1 bg-[#a0a0a0] border-l border-[#777]">
                                    <div className="w-[205px] flex flex-col whitespace-nowrap">
                                        <div className="h-[12px] flex items-center pt-[1px] bg-[#f0f0f0] border-b border-[#aaa]">
                                            <div className="w-[10px] h-full border-r border-[#bbb]" />
                                            <span className="w-[41px] pl-[3px] h-full flex items-center border-r border-[#bbb] text-[#333]">Time [s]</span>
                                            <span className="w-[78px] pl-[2px] h-full flex items-center border-r border-[#bbb] text-[#c01818]"><CheckBox />Minimum [Pa]</span>
                                            <span className="flex-1 pl-[2px] h-full flex items-center text-[#168a2c]"><CheckBox />Maximum [Pa]</span>
                                        </div>
                                        <div className="h-[12px] flex items-center pt-[1px] bg-[#e7e6dc] text-[#333]">
                                            <span className="w-[10px] h-full flex items-center justify-center border-r border-[#999] bg-[#f0f0f0]">1</span>
                                            <span className="w-[41px] pl-[3px]">1.</span>
                                            <span className="w-[78px] pl-[2px]">3682.7</span>
                                            <span className="pl-[2px]">8.3882e+006</span>
                                        </div>
                                    </div>
                                </div>
                            </div>
                        </div>
                    </div>
                </div>

                {/* status bar */}
                <div className="h-[15px] shrink-0 mt-[2px] flex items-stretch border-t border-[#a0a0a0] bg-[#f0f0f0] text-[#333] whitespace-nowrap">
                    <div className="w-[255px] border-r border-[#b8b8b8]" />
                    <div className="w-[122px] border-r border-[#b8b8b8]" />
                    <div className="w-[102px] border-r border-[#b8b8b8] flex items-center pl-[2px]">
                        <Sv w={12} h={11}><path d="M1 5l3-1V1h5v8H4l-3 2z" fill="#f0d050" stroke="#8a7a20" strokeWidth=".6" /></Sv>
                        <span className="ml-[3px]">No Messages</span>
                    </div>
                    <div className="w-[229px] border-r border-[#b8b8b8] flex items-center pl-[3px]">No Selection</div>
                    <div className="flex-1 flex items-center pl-[1px]">
                        <span className="w-[104px]">Metric (m, kg, N, s, V, A)</span>
                        <span className="w-[39px]">Degrees</span>
                        <span className="w-[29px]">rad/s</span>
                        <span className="flex-1">Celsius</span>
                        <Sv w={9} h={9} vb="0 0 9 9"><path d="M1 9l8-8M5 9l4-4" stroke="#999" /></Sv>
                    </div>
                </div>

                {/* taskbar */}
                <div className="h-[30px] shrink-0 flex items-stretch bg-[#a5bedb]">
                    <Slot className="w-[45px] pr-[3px] bg-[#8ea4bf]">
                        <Sv w={27} h={27} vb="0 0 27 27">
                            <circle cx="13.500" cy="13.500" r="13" fill="#1d5c8c" stroke="#dce6ee" strokeWidth=".6" />
                            <path d="M7 8l6-1v6H7z" fill="#e04a28" />
                            <path d="M14 7l6-1v7h-6z" fill="#6cb82c" />
                            <path d="M7 14h6v6l-6-1z" fill="#2a8ae0" />
                            <path d="M14 14h6v7l-6-1z" fill="#f4c020" />
                        </Sv>
                    </Slot>
                    <Slot className="w-[43px] border-x border-[#d8e4ef] bg-[#bcd0e4]">
                        <Sv w={24} h={22} vb="0 0 24 22">
                            <path d="M1 2h8l2 2h12v16H1z" fill="#f0d68a" stroke="#b89a4a" strokeWidth=".6" />
                            <path d="M4 11h16v9H4z" fill="#6fb0d8" />
                            <path d="M7 14h10v4H7z" fill="#e8f2f8" />
                        </Sv>
                    </Slot>
                    <Slot className="w-[45px] mx-[1px] border-x border-[#d8e4ef] bg-[#bcd0e4]">
                        <Sv w={23} h={23} vb="0 0 24 24">
                            <path d="M12 12L2.470 6.500A11 11 0 0121.530 6.500Z" fill="#dd4434" />
                            <path d="M12 12L21.530 6.500A11 11 0 0112 23Z" fill="#f6c42c" />
                            <path d="M12 12L12 23A11 11 0 012.470 6.500Z" fill="#2fa34e" />
                            <circle cx="12" cy="12" r="5.500" fill="#fff" />
                            <circle cx="12" cy="12" r="4.300" fill="#4a86e8" />
                        </Sv>
                    </Slot>
                    <Slot className="w-[43px] mx-[1px] border-x border-[#d8e4ef] bg-[#bcd0e4]">
                        <Sv w={24} h={24} vb="0 0 24 24">
                            <rect x=".5" y=".5" width="23" height="23" rx="5" fill="#f6d21c" />
                            <path d="M5 22L11 3h3l5 19h-4L12.500 11 9 22z" fill="#111" />
                        </Sv>
                    </Slot>
                    <Slot className="w-[44px] ml-[1px] border-x border-[#d8e4ef] bg-[#c3d5e7]"><MegaLogo /></Slot>
                    <div className="flex-1" />
                    <div className="flex items-center text-[#eef3f9]">
                        <Sv w={6} h={4} vb="0 0 6 4"><path d="M0 4l3-4 3 4z" fill="#eaf0f6" /></Sv>
                        <Slot className="w-[17px] ml-[9px]"><Sv><path d="M2 0v12" stroke="#eee" /><path d="M3 1h6l-1 3 1 3H3z" fill="#fff" /><circle cx="8" cy="8" r="3.500" fill="#d01818" /></Sv></Slot>
                        <Slot className="w-[18px]"><Sv><path d="M1 1h5v4H1zM6 7h5v4H6zM3 5v3h3" fill="none" stroke="#f2f2f2" /></Sv></Slot>
                        <Slot className="w-[19px]"><Sv><path d="M1 4h2l3-3v10L3 8H1z" fill="#f0f0f0" /><circle cx="8.500" cy="8" r="3" fill="#d01818" /></Sv></Slot>
                        <div className="flex flex-col items-end w-[42px] ml-[6px] mr-[7px] gap-[4px]">
                            <span>12:28 PM</span>
                            <span>6/16/2018</span>
                        </div>
                    </div>
                    <div className="w-[9px] bg-linear-to-b from-[#5a6670] to-[#7c8c9a] border-l border-[#dfe8f0]" />
                </div>
            </div>

            <p className="mt-[24px] w-[939px] text-[25px] leading-[42px] text-justify">
                From the above figure values of maximum stress - 8.3882e+006 pa and minimum stress is 3682.7 pa.
            </p>

            <div className="mt-auto pb-[103px] text-center text-[22px] leading-[26px] font-['Open_Sans',sans-serif] text-[#222]">28</div>
        </div>
    )
}
